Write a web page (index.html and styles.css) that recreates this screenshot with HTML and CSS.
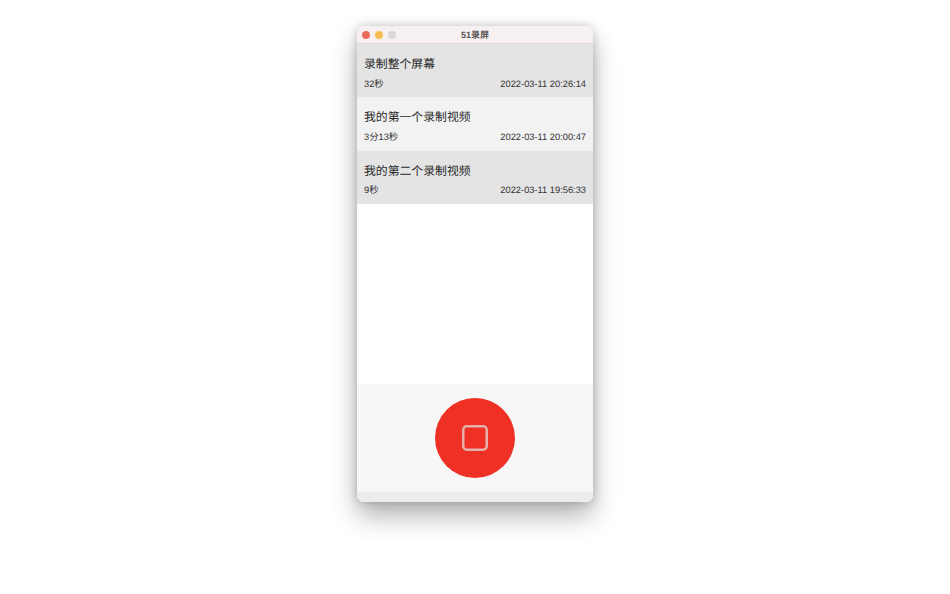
FILE: index.html
```html
<!DOCTYPE html>
<html lang="zh">
<head>
<meta charset="utf-8">
<title>51录屏</title>
<link rel="stylesheet" href="styles.css">
</head>
<body>
<main class="window">
  <header class="titlebar">
    <div class="lights">
      <span class="light red"></span>
      <span class="light yellow"></span>
      <span class="light grey"></span>
    </div>
    <div class="title">51录屏</div>
  </header>
  <section class="list">
    <article class="row shaded">
      <div class="name">录制整个屏幕</div>
      <div class="meta"><span>32秒</span><span>2022-03-11 20:26:14</span></div>
    </article>
    <article class="row">
      <div class="name">我的第一个录制视频</div>
      <div class="meta"><span>3分13秒</span><span>2022-03-11 20:00:47</span></div>
    </article>
    <article class="row shaded">
      <div class="name">我的第二个录制视频</div>
      <div class="meta"><span>9秒</span><span>2022-03-11 19:56:33</span></div>
    </article>
  </section>
  <section class="controls">
    <button class="record" aria-label="停止">
      <svg class="stop" width="28" height="28" viewBox="0 0 28 28"><rect x="2.25" y="2.25" width="23.5" height="23.5" rx="3.5"/></svg>
    </button>
  </section>
  <footer class="statusbar"></footer>
</main>
</body>
</html>
```
FILE: styles.css
```css
html, body {
  margin: 0;
  height: 594px;
  overflow: hidden;
  background: #fff;
}
body {
  font-family: "Liberation Sans", "Noto Sans CJK SC", sans-serif;
  color: #222;
  text-rendering: geometricPrecision;
}
.window {
  width: 236px;
  height: 476px;
  margin: 26px auto 0;
  display: flex;
  flex-direction: column;
  border-radius: 7px;
  overflow: hidden;
  background: #fff;
  box-shadow: 0 14px 26px rgba(0, 0, 0, .3), 0 0 10px rgba(0, 0, 0, .2);
}
.titlebar {
  height: 18px;
  box-sizing: border-box;
  flex: none;
  display: flex;
  align-items: center;
  justify-content: center;
  position: relative;
  background: #f6f0f1;
  border-bottom: 1px solid #dcd9d9;
}
.lights {
  position: absolute;
  left: 5px;
  top: 5px;
  display: flex;
  gap: 5px;
}
.light {
  width: 8px;
  height: 8px;
  border-radius: 50%;
}
.red { background: #ee6a5f; }
.yellow { background: #f5bd4f; }
.grey { background: #d9d6d8; }
.title {
  font-size: 9px;
  font-weight: 700;
  color: #5a5658;
}
.list {
  flex: 1;
  background: #fff;
}
.row {
  height: 53.33px;
  box-sizing: border-box;
  padding: 12px 7px 0;
  background: #f2f2f2;
}
.row.shaded {
  background: #e4e4e4;
}
.name {
  font-size: 11.85px;
  line-height: 16px;
  color: #2a2a2a;
}
.meta {
  display: flex;
  justify-content: space-between;
  margin-top: 4.5px;
  font-size: 9.3px;
  line-height: 14px;
  color: #333;
}
.controls {
  height: 108px;
  flex: none;
  display: flex;
  align-items: center;
  justify-content: center;
  background: #f7f7f7;
}
.record {
  width: 80px;
  height: 80px;
  padding: 0;
  border: 0;
  border-radius: 50%;
  display: flex;
  align-items: center;
  justify-content: center;
  background: #ee3124;
}
.stop {
  display: block;
}
.stop rect {
  fill: none;
  stroke: #e8b0ab;
  stroke-width: 2.5;
}
.statusbar {
  height: 10px;
  flex: none;
  background: #ececec;
}
```
